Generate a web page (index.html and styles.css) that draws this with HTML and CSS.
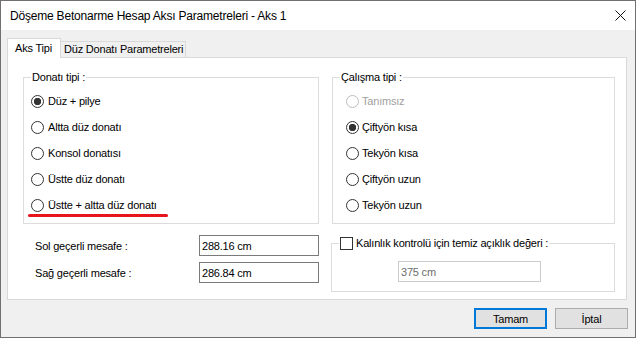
FILE: index.html
```html
<!DOCTYPE html>
<html lang="tr">
<head>
  <meta charset="UTF-8" />
  <title>Döşeme Betonarme Hesap Aksı Parametreleri</title>
  <link rel="stylesheet" href="styles.css">
</head>
<body>
  <div class="window">
    <div class="titlebar">
      <span class="title">Döşeme Betonarme Hesap Aksı Parametreleri - Aks 1</span>
      <svg class="close" width="11" height="11" viewBox="0 0 11 11">
        <path d="M0.5 0.5L10.5 10.5M10.5 0.5L0.5 10.5" stroke="#111" stroke-width="1" fill="none"/>
      </svg>
    </div>

    <div class="body">
      <div class="tabs">
        <div class="tab tab-active">Aks Tipi</div>
        <div class="tab">Düz Donatı Parametreleri</div>
      </div>

      <div class="panel">
        <div class="group group-left">
          <div class="group-title">Donatı tipi :</div>
          <div class="option"><span class="radio radio-checked"></span>Düz + pilye</div>
          <div class="option"><span class="radio"></span>Altta düz donatı</div>
          <div class="option"><span class="radio"></span>Konsol donatısı</div>
          <div class="option"><span class="radio"></span>Üstte düz donatı</div>
          <div class="option"><span class="radio"></span>Üstte + altta düz donatı</div>
          <span class="mark"></span>
        </div>

        <div class="group group-right">
          <div class="group-title">Çalışma tipi :</div>
          <div class="option option-disabled"><span class="radio radio-disabled"></span>Tanımsız</div>
          <div class="option"><span class="radio radio-checked"></span>Çiftyön kısa</div>
          <div class="option"><span class="radio"></span>Tekyön kısa</div>
          <div class="option"><span class="radio"></span>Çiftyön uzun</div>
          <div class="option"><span class="radio"></span>Tekyön uzun</div>
        </div>

        <div class="distances">
          <span class="field-label">Sol geçerli mesafe :</span>
          <input class="textbox" type="text" value="288.16 cm" readonly />
          <span class="field-label">Sağ geçerli mesafe :</span>
          <input class="textbox" type="text" value="286.84 cm" readonly />
        </div>

        <div class="group group-check">
          <div class="group-title check-title"><span class="check"></span>Kalınlık kontrolü için temiz açıklık değeri :</div>
          <input class="textbox textbox-disabled" type="text" value="375 cm" disabled />
        </div>
      </div>

      <div class="buttons">
        <button class="btn btn-default">Tamam</button>
        <button class="btn">İptal</button>
      </div>
    </div>
  </div>
</body>
</html>
```

FILE: styles.css
```css
body {
  margin: 0;
  background: #fff;
  font-family: "Liberation Sans", Arial, sans-serif;
  font-size: 11px;
  letter-spacing: -0.2px;
  color: #000;
}
.window {
  width: 636px;
  height: 338px;
  box-sizing: border-box;
  border: 1px solid #707070;
  background: #f0f0f0;
}
.titlebar {
  height: 29px;
  background: #fff;
  display: flex;
  align-items: center;
  justify-content: space-between;
  padding: 0 9px;
}
.title {
  font-size: 12px;
  padding-top: 1px;
}
.body {
  padding: 8px 8px 0 6px;
}
.tabs {
  display: flex;
  align-items: flex-end;
  height: 19px;
}
.tab {
  height: 16px;
  width: 126px;
  box-sizing: border-box;
  border: 1px solid #d9d9d9;
  border-bottom: none;
  margin-left: -1px;
  padding-left: 3px;
  line-height: 15px;
  background: #f0f0f0;
  white-space: nowrap;
}
.tab-active {
  position: relative;
  z-index: 1;
  height: 20px;
  width: 54px;
  margin-left: 0;
  margin-bottom: -1px;
  padding-left: 7px;
  line-height: 19px;
  background: #fff;
}
.panel {
  height: 243px;
  box-sizing: border-box;
  border: 1px solid #d9d9d9;
  background: #fff;
  display: grid;
  grid-template-columns: 296px 283px;
  column-gap: 13px;
  row-gap: 11px;
  align-content: start;
  align-items: start;
  padding: 19px 0 0 15px;
}
.group {
  position: relative;
  padding: 0 7px 5px;
  border: 1px solid #dcdcdc;
}
.group-title {
  width: max-content;
  margin: -8px 0 4px;
  padding: 0 1px;
  line-height: 14px;
  background: #fff;
}
.option {
  display: flex;
  align-items: center;
  gap: 4px;
  height: 26px;
}
.group-right .option {
  padding-left: 6px;
  gap: 3px;
}
.option-disabled {
  color: #a0a0a0;
}
.radio {
  flex: none;
  width: 13px;
  height: 13px;
  box-sizing: border-box;
  border: 1px solid #333;
  border-radius: 50%;
  background: #fff;
}
.radio-checked {
  background: radial-gradient(circle, #333 3.4px, #fff 4px);
}
.radio-disabled {
  border-color: #bcbcbc;
}
.mark {
  position: absolute;
  left: 4px;
  top: 136px;
  width: 140px;
  height: 3px;
  border-radius: 2px;
  background: #e8141c;
}
.distances {
  display: grid;
  grid-template-columns: 164px 120px;
  grid-auto-rows: 21px;
  row-gap: 6px;
  align-items: center;
  padding-left: 12px;
}
.textbox {
  display: block;
  width: 120px;
  height: 21px;
  box-sizing: border-box;
  border: 1px solid #7a7a7a;
  padding: 0 2px;
  font: inherit;
  letter-spacing: inherit;
  color: #000;
  background: #fff;
  outline: none;
}
.group-check {
  margin-top: 8px;
  margin-left: -1px;
  padding: 0 7px 9px;
}
.check-title {
  display: flex;
  align-items: center;
  gap: 3px;
  margin-bottom: 11px;
}
.check {
  width: 13px;
  height: 13px;
  box-sizing: border-box;
  border: 1px solid #333;
  background: #fff;
}
.textbox-disabled {
  width: 143px;
  margin-left: 59px;
  border-color: #cccccc;
  color: #6d6d6d;
}
.buttons {
  display: flex;
  justify-content: flex-end;
  gap: 8px;
  margin: 8px -1px 0 0;
}
.btn {
  width: 73px;
  height: 21px;
  box-sizing: border-box;
  border: 1px solid #adadad;
  background: #e1e1e1;
  font: inherit;
  letter-spacing: inherit;
  color: #000;
  padding: 0;
}
.btn-default {
  border: 2px solid #0078d7;
}
```
